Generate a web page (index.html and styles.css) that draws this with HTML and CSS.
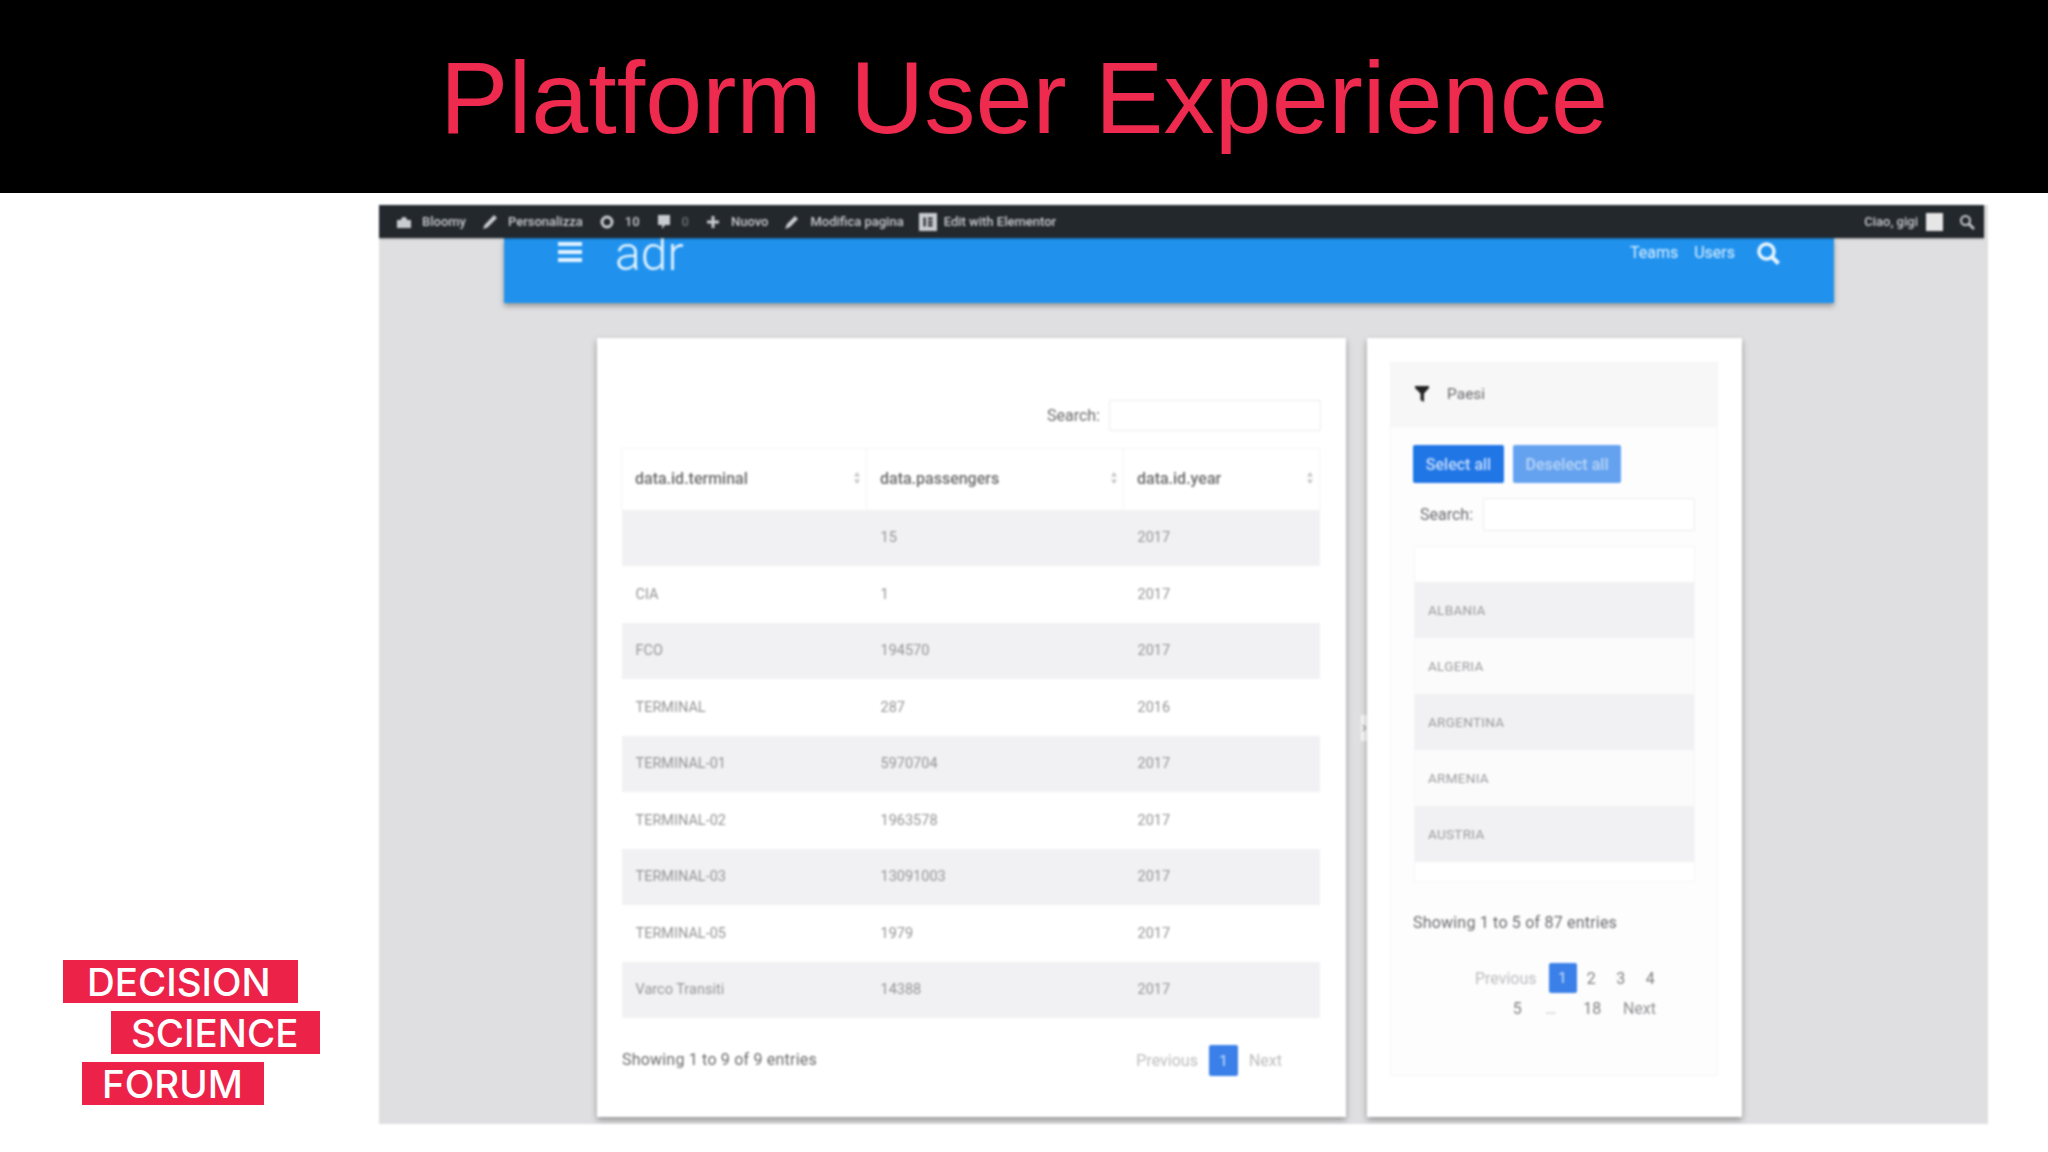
FILE: index.html
```html
<!DOCTYPE html>
<html lang="it">
<head>
<meta charset="utf-8">
<title>Platform User Experience</title>
<link rel="stylesheet" href="styles.css">
</head>
<body>
<div class="slide">
  <header class="slide-head"><h1 class="slide-title">Platform User Experience</h1></header>
  <div class="slide-body">
    <aside class="brand">
      <div class="logo">
        <span class="logo-bar bar-a">DECISION</span>
        <span class="logo-bar bar-b">SCIENCE</span>
        <span class="logo-bar bar-c">FORUM</span>
      </div>
    </aside>
    <main class="screen">
      <nav class="adminbar">
        <div class="ab-group">
          <span class="ab-item"><svg class="ab-icon" viewBox="0 0 16 16"><path d="M1 6h14v8H1zM5 6a3 3 0 0 1 6 0v1H5z"/></svg>Bloomy</span>
          <span class="ab-item"><svg class="ab-icon" viewBox="0 0 16 16"><path d="M1 15l1.500-4L12 1l3 3-9.500 9.500z"/></svg>Personalizza</span>
          <span class="ab-item"><svg class="ab-icon" viewBox="0 0 16 16"><path d="M8 1.500a6.500 6.500 0 1 0 0 13 6.500 6.500 0 0 0 0-13zm0 3a3.500 3.500 0 1 1 0 7 3.500 3.500 0 0 1 0-7z" fill-rule="evenodd"/></svg>10</span>
          <span class="ab-item"><svg class="ab-icon" viewBox="0 0 16 16"><path d="M2 1h12v10H9l-3 4v-4H2z"/></svg><span class="ab-dim">0</span></span>
          <span class="ab-item"><svg class="ab-icon" viewBox="0 0 16 16"><path d="M6.500 2h3v4.500H14v3H9.500V14h-3V9.500H2v-3h4.500z"/></svg>Nuovo</span>
          <span class="ab-item"><svg class="ab-icon" viewBox="0 0 16 16"><path d="M1 15l2-5L11 2l3 3-8 8z"/></svg>Modifica pagina</span>
          <span class="ab-item ab-item-e"><svg class="ab-icon ab-icon-e" viewBox="0 0 16 16"><path d="M0 0h16v16H0zM4 4v8h2V4zm4 0v2h4V4zm0 3v2h4V7zm0 3v2h4v-2z" fill-rule="evenodd"/></svg>Edit with Elementor</span>
        </div>
        <div class="ab-group ab-right">
          <span class="ab-item ab-hello">Ciao, gigi<span class="ab-avatar"></span></span>
          <svg class="ab-icon" viewBox="0 0 16 16"><circle cx="6.500" cy="6.500" r="4.500" fill="none" stroke="currentColor" stroke-width="2"/><path d="M10 10l5 5" stroke="currentColor" stroke-width="2.500"/></svg>
        </div>
      </nav>
      <header class="appbar">
        <div class="appbar-left">
          <svg class="burger" viewBox="0 0 24 21"><path d="M0 0h24v4H0zM0 8h24v4H0zM0 16h24v4H0z"/></svg>
          <span class="app-name">adr</span>
        </div>
        <div class="appbar-right">
          <a class="app-link">Teams</a>
          <a class="app-link">Users</a>
          <svg class="app-search" viewBox="0 0 24 24"><circle cx="10.500" cy="10.500" r="7.500" fill="none" stroke="currentColor" stroke-width="3.500"/><path d="M15.500 15.500l7 7" stroke="currentColor" stroke-width="4"/></svg>
        </div>
      </header>
      <section class="cards">
        <article class="card card-main">
          <div class="search-row"><label class="search-label">Search:</label><span class="search-input"></span></div>
          <table class="data">
            <thead>
              <tr>
                <th class="col-a"><span class="th-in">data.id.terminal<svg class="sort" viewBox="0 0 6 12"><path d="M3 0l3 4.500H0zM3 12L0 7.500h6z"/></svg></span></th>
                <th class="col-b"><span class="th-in">data.passengers<svg class="sort" viewBox="0 0 6 12"><path d="M3 0l3 4.500H0zM3 12L0 7.500h6z"/></svg></span></th>
                <th class="col-c"><span class="th-in">data.id.year<svg class="sort" viewBox="0 0 6 12"><path d="M3 0l3 4.500H0zM3 12L0 7.500h6z"/></svg></span></th>
              </tr>
            </thead>
            <tbody>
              <tr><td></td><td>15</td><td>2017</td></tr>
              <tr><td>CIA</td><td>1</td><td>2017</td></tr>
              <tr><td>FCO</td><td>194570</td><td>2017</td></tr>
              <tr><td>TERMINAL</td><td>287</td><td>2016</td></tr>
              <tr><td>TERMINAL-01</td><td>5970704</td><td>2017</td></tr>
              <tr><td>TERMINAL-02</td><td>1963578</td><td>2017</td></tr>
              <tr><td>TERMINAL-03</td><td>13091003</td><td>2017</td></tr>
              <tr><td>TERMINAL-05</td><td>1979</td><td>2017</td></tr>
              <tr><td>Varco Transiti</td><td>14388</td><td>2017</td></tr>
            </tbody>
          </table>
          <div class="table-foot">
            <span class="info">Showing 1 to 9 of 9 entries</span>
            <div class="pager">
              <span class="pg-muted">Previous</span>
              <span class="pg-current">1</span>
              <span class="pg-muted">Next</span>
            </div>
          </div>
        </article>
        <span class="drawer-tab"><svg class="drawer-arrow" viewBox="0 0 6 26"><path d="M2 10l2.500 3L2 16" fill="none" stroke="currentColor" stroke-width="1.200"/></svg></span>
        <article class="card card-side">
          <div class="panel">
            <div class="panel-head">
              <svg class="funnel" viewBox="0 0 16 16"><path d="M1 0h14v2L10 7.500V16L6.500 14V7.500L1 2z"/></svg>
              <span class="panel-title">Paesi</span>
            </div>
            <div class="panel-body">
              <div class="btns">
                <span class="btn btn-on">Select all</span>
                <span class="btn btn-off">Deselect all</span>
              </div>
              <div class="side-search"><label class="search-label">Search:</label><span class="search-input"></span></div>
              <div class="list">
                <div class="list-head"></div>
                <div class="list-row odd">ALBANIA</div>
                <div class="list-row">ALGERIA</div>
                <div class="list-row odd">ARGENTINA</div>
                <div class="list-row">ARMENIA</div>
                <div class="list-row odd">AUSTRIA</div>
                <div class="list-end"></div>
              </div>
              <div class="info side-info">Showing 1 to 5 of 87 entries</div>
              <div class="side-pager">
                <div class="pg-line">
                  <span class="pg-muted">Previous</span>
                  <span class="pg-current">1</span>
                  <span class="pg-num">2</span>
                  <span class="pg-num">3</span>
                  <span class="pg-num">4</span>
                </div>
                <div class="pg-line pg-line-b">
                  <span class="pg-num">5</span>
                  <span class="pg-num pg-dots">…</span>
                  <span class="pg-num">18</span>
                  <span class="pg-next">Next</span>
                </div>
              </div>
            </div>
          </div>
        </article>
      </section>
    </main>
  </div>
</div>
</body>
</html>
```

FILE: styles.css
```css
* { box-sizing: border-box; }
html, body { margin: 0; padding: 0; background: #fff; }
body { width: 2048px; height: 1152px; overflow: hidden; font-family: Roboto, "Liberation Sans", sans-serif; }
.slide { width: 2048px; height: 1152px; display: flex; flex-direction: column; }

.slide-head { height: 193px; background: #000; display: flex; justify-content: center; padding-top: 40px; }
.slide-title { margin: 0; font: 400 102.500px/116px "Liberation Sans", Arial, sans-serif; color: #ee2a4f; }

.slide-body { display: flex; padding-top: 12px; height: 931px; }
.brand { width: 379px; display: flex; align-items: flex-end; padding-left: 63px; }
.logo { display: flex; flex-direction: column; gap: 8px; align-items: flex-start; margin-bottom: 19px; }
.logo-bar { display: block; height: 43px; background: #ec2249; color: #fff; font: 500 38.500px/44px Inter, "Noto Sans", sans-serif; white-space: nowrap; }
.bar-a { width: 235px; padding-left: 24px; }
.bar-b { width: 209px; margin-left: 48px; padding-left: 20px; }
.bar-c { width: 182px; margin-left: 19px; padding-left: 20px; }

.screen { width: 1609px; height: 919px; background: #dfdfe1; filter: blur(0.9px); overflow: hidden; display: flex; flex-direction: column; }

.adminbar { width: 1605px; height: 33px; flex: none; background: #23282d; color: #c9cccf; display: flex; justify-content: space-between; align-items: center; padding: 0 9px 0 17px; font-size: 13px; font-weight: 500; position: relative; z-index: 1; box-shadow: 0 1px 2px rgba(0,0,0,.3); }
.ab-group { display: flex; align-items: center; gap: 16px; }
.ab-item { display: flex; align-items: center; gap: 10px; white-space: nowrap; }
.ab-item-e { gap: 7px; margin-left: -1px; }
.ab-hello { gap: 8px; }
.ab-icon { width: 16px; height: 16px; fill: currentColor; flex: none; }
.ab-icon-e { width: 18px; height: 18px; }
.ab-dim { color: #6d7277; }
.ab-avatar { width: 17px; height: 18px; background: #e6e6e6; }

.appbar { width: 1330px; height: 65px; flex: none; margin-left: 125px; background: #2092ee; color: #dff1ff; display: flex; justify-content: space-between; box-shadow: 0 3px 5px rgba(0,0,0,.32); padding: 0 54px; }
.appbar-left { display: flex; align-items: flex-start; gap: 33px; }
.burger { width: 24px; height: 21px; margin-top: 4px; fill: #e4f4ff; }
.app-name { font-size: 48px; font-weight: 300; line-height: 40px; color: #e4f4ff; margin-top: -4px; }
.appbar-right { display: flex; align-items: flex-start; gap: 16px; padding-top: 5px; }
.app-link { font-size: 16px; line-height: 20px; }
.app-search { width: 24px; height: 24px; margin: -2px 0 0 5px; color: #eaf6ff; }

.cards { display: flex; align-items: flex-start; padding: 35px 0 0 218px; }
.card { height: 779px; background: #fff; box-shadow: 0 3px 6px rgba(0,0,0,.35); flex: none; }
.card-main { width: 749px; padding: 62px 25px 0 24px; }
.card-side { width: 375px; padding: 24px 24px 0 23px; }
.drawer-tab { width: 21px; height: 779px; flex: none; display: flex; align-items: center; justify-content: flex-end; }
.drawer-arrow { width: 6px; height: 26px; background: #f8f8f9; color: #999; }

.search-row { display: flex; justify-content: flex-end; align-items: center; gap: 9px; height: 30px; }
.search-label { font-size: 16px; color: #6a6a6c; }
.search-input { display: block; width: 212px; height: 31px; background: #fff; border: 1px solid #ececee; border-radius: 2px; }

.data { width: 698px; border-collapse: collapse; table-layout: fixed; margin-top: 18px; font-size: 14.500px; color: #949496; }
.col-a { width: 245px; }
.col-b { width: 257px; }
.col-c { width: 196px; }
.data th { height: 61px; padding: 0 6px 2px 13px; font-weight: 500; font-size: 16px; color: #6a6a6c; text-align: left; border: 1px solid #f5f5f6; border-bottom: 0; }
.th-in { display: flex; justify-content: space-between; align-items: center; }
.sort { width: 6px; height: 12px; fill: #c4c4c6; }
.data td { height: 56.500px; padding: 0 14px; }
.data tbody tr:nth-child(odd) { background: #f1f1f3; }

.table-foot { display: flex; justify-content: space-between; align-items: center; height: 36px; margin-top: 23px; padding: 0 39px 0 1px; }
.info { font-size: 16px; letter-spacing: .2px; color: #6a6a6c; }
.pager { display: flex; align-items: center; gap: 11px; font-size: 16px; margin-top: 3px; }
.pg-muted { color: #bcbcbe; font-size: 16px; }
.pg-current { width: 29px; height: 31px; background: #3a80e8; color: #cfe2fb; border-radius: 2px; display: flex; align-items: center; justify-content: center; font-size: 15px; }

.panel { height: 714px; border: 1px solid #f6f6f7; background: #fdfdfe; }
.panel-head { height: 64px; background: #f7f7f8; display: flex; align-items: center; padding: 0 0 2px 23px; gap: 17px; }
.funnel { width: 16px; height: 16px; fill: #222; }
.panel-title { font-size: 15.500px; color: #6a6a6c; }
.panel-body { padding: 18px 22px 0 22px; }
.btns { display: flex; gap: 9px; }
.btn { height: 38px; display: flex; align-items: center; justify-content: center; font-size: 16px; font-weight: 500; color: #c7defc; border-radius: 2px; }
.btn-on { width: 91px; background: #2176e6; }
.btn-off { width: 108px; background: #64a2ef; color: #b9d5f7; }
.side-search { display: flex; align-items: center; gap: 10px; margin-top: 15px; padding-left: 7px; height: 33px; }
.side-search .search-input { width: 212px; height: 33px; }
.list { margin-top: 15px; width: 281px; margin-left: 1px; border: 1px solid #f5f5f6; font-size: 13.500px; color: #9a9a9c; letter-spacing: .3px; }
.list-head { height: 35px; background: #fff; }
.list-row { height: 56px; padding-left: 13px; display: flex; align-items: center; background: #fbfbfc; }
.list-row.odd { background: #f1f1f3; }
.list-end { height: 19px; background: #fff; }
.side-info { margin-top: 32px; line-height: 18px; }
.side-pager { margin-top: 31px; display: flex; flex-direction: column; width: 252px; }
.pg-line { display: flex; justify-content: flex-end; align-items: center; height: 30px; font-size: 16px; color: #808082; }
.pg-line-b { padding-right: 9px; }
.pg-line .pg-muted { margin-right: 12px; }
.pg-num { width: 29.500px; text-align: center; color: #808082; font-size: 16px; }
.pg-line .pg-current { width: 28px; height: 30px; }
.pg-dots { color: #bbb; margin: 0 12px 0 4px; }
.pg-next { color: #909092; width: 40px; margin-left: 9px; text-align: right; }
```
